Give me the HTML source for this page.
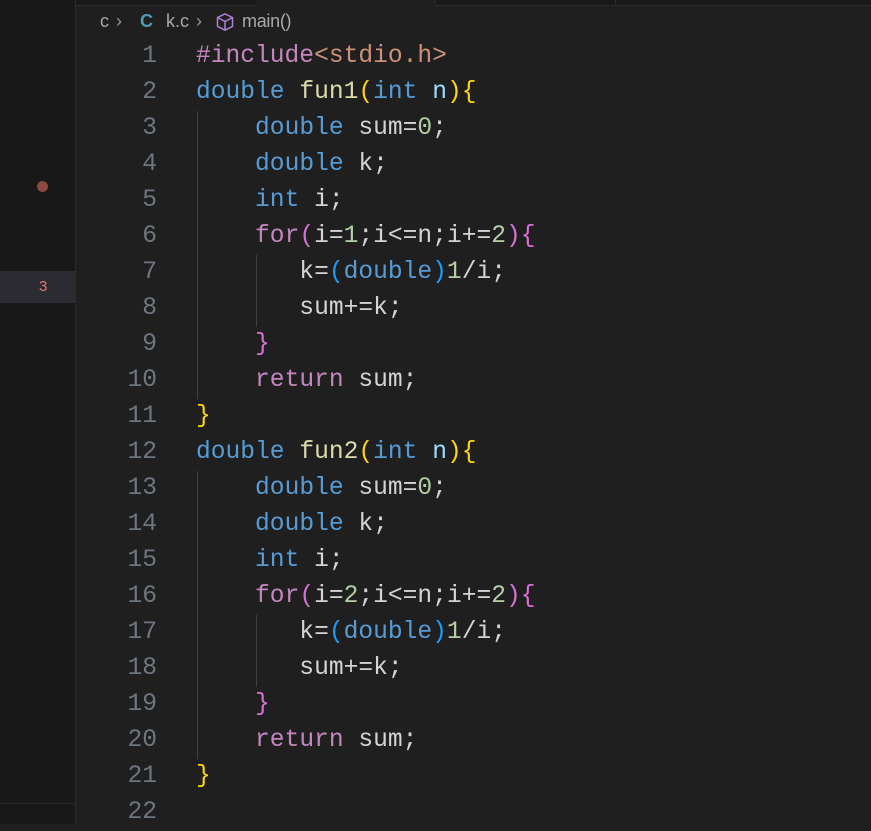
<!DOCTYPE html><html><head><style>
body{margin:0;width:871px;height:824px;background:#1f1f1f;overflow:hidden;position:relative;font-family:"Liberation Mono",monospace}
.side{position:absolute;left:0;top:0;width:75px;height:824px;background:#181818;border-right:1px solid #2b2b2b}
.ln{position:absolute;left:76px;width:81px;text-align:right;color:#6e7681;font-size:24.6px;line-height:36px}
.code{position:absolute;left:196px;color:#d4d4d4;font-size:24.6px;line-height:36px;white-space:pre}
.k{color:#569cd6}.c{color:#c586c0}.f{color:#dcdcaa}.n{color:#b5cea8}.s{color:#ce9178}.v{color:#9cdcfe}
.y{color:#ffd700}.p{color:#da70d6}.b{color:#179fff}
.g{position:absolute;width:1px;background:#404040}
.bc{position:absolute;top:11px;font-family:'Liberation Sans',sans-serif;font-size:18px;color:#a9a9a9;white-space:pre}
</style></head><body>
<div class="side"></div>
<div style="position:absolute;left:0;top:271px;width:75px;height:32px;background:#2b2b31"></div>
<div style="position:absolute;left:39px;top:278px;color:#e07a6a;font-size:15px;font-family:'Liberation Sans',sans-serif">3</div>
<div style="position:absolute;left:37px;top:181px;width:11px;height:11px;border-radius:50%;background:#8a4a3e"></div>
<div style="position:absolute;left:0;top:803px;width:75px;height:1px;background:#2b2b2b"></div>
<div style="position:absolute;left:76px;top:0;width:180px;height:5px;background:#181818;border-bottom:1px solid #2b2b2b"></div>
<div style="position:absolute;left:435px;top:0;width:436px;height:5px;background:#181818;border-bottom:1px solid #2b2b2b;border-left:1px solid #2b2b2b"></div>
<div style="position:absolute;left:615px;top:0;width:1px;height:5px;background:#2b2b2b"></div>
<div class="bc" style="left:100px">c</div>
<div class="bc" style="left:116px;color:#999">›</div>
<div class="bc" style="left:140px;color:#519aba;font-weight:bold">C</div>
<div class="bc" style="left:166px">k.c</div>
<div class="bc" style="left:196px;color:#999">›</div>
<svg width="20" height="20" viewBox="0 0 16 16" style="position:absolute;left:215px;top:12px"><path d="M8 1.5l6 3v7l-6 3-6-3v-7z M2 4.5l6 3 6-3 M8 7.5v7" fill="none" stroke="#b180d7" stroke-width="1.2"/></svg>
<div class="bc" style="left:242px;letter-spacing:-0.3px">main()</div>
<div class="g" style="left:197px;top:111px;height:288px"></div>
<div class="g" style="left:197px;top:471px;height:288px"></div>
<div class="g" style="left:256px;top:255px;height:72px"></div>
<div class="g" style="left:256px;top:615px;height:72px"></div>
<div class="ln" style="top:39px">1<br>2<br>3<br>4<br>5<br>6<br>7<br>8<br>9<br>10<br>11<br>12<br>13<br>14<br>15<br>16<br>17<br>18<br>19<br>20<br>21<br>22</div>
<div class="code" style="top:39px"><span class="c">#include</span><span class="s">&lt;stdio.h&gt;</span>
<span class="k">double</span> <span class="f">fun1</span><span class="y">(</span><span class="k">int</span> <span class="v">n</span><span class="y">){</span>
    <span class="k">double</span> sum=<span class="n">0</span>;
    <span class="k">double</span> k;
    <span class="k">int</span> i;
    <span class="c">for</span><span class="p">(</span>i=<span class="n">1</span>;i&lt;=n;i+=<span class="n">2</span><span class="p">){</span>
       k=<span class="b">(</span><span class="k">double</span><span class="b">)</span><span class="n">1</span>/i;
       sum+=k;
    <span class="p">}</span>
    <span class="c">return</span> sum;
<span class="y">}</span>
<span class="k">double</span> <span class="f">fun2</span><span class="y">(</span><span class="k">int</span> <span class="v">n</span><span class="y">){</span>
    <span class="k">double</span> sum=<span class="n">0</span>;
    <span class="k">double</span> k;
    <span class="k">int</span> i;
    <span class="c">for</span><span class="p">(</span>i=<span class="n">2</span>;i&lt;=n;i+=<span class="n">2</span><span class="p">){</span>
       k=<span class="b">(</span><span class="k">double</span><span class="b">)</span><span class="n">1</span>/i;
       sum+=k;
    <span class="p">}</span>
    <span class="c">return</span> sum;
<span class="y">}</span>
</div>
</body></html>
